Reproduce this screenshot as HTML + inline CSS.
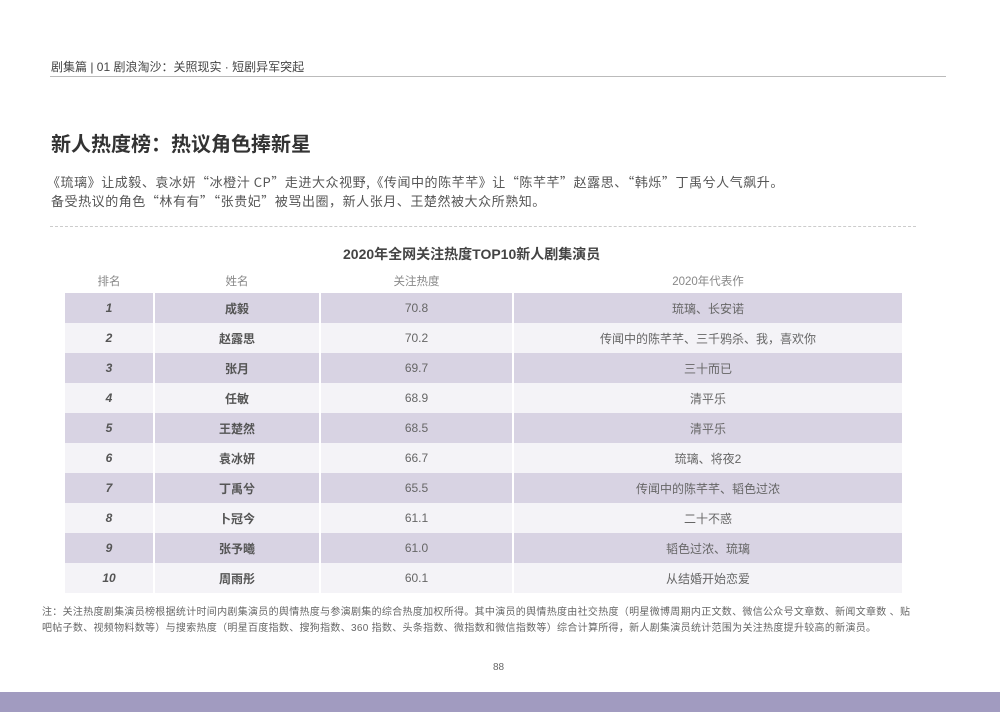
<!DOCTYPE html>
<html><head><meta charset="utf-8"><style>
*{margin:0;padding:0;box-sizing:border-box}
body{width:1000px;height:712px;background:#fff;position:relative;overflow:hidden;font-family:"Liberation Sans","Noto Sans CJK SC",sans-serif;color:#555}
.abs{position:absolute;white-space:nowrap}
.cjk{font-family:"Noto Sans CJK SC",sans-serif}
table{position:absolute;left:65px;top:268px;border-collapse:collapse;width:837px;table-layout:fixed}
td{text-align:center;font-size:12px;color:#666;height:30px;border-left:2px solid #fff;padding:0}
td:first-child{border-left:none}
tr.h td{height:25px;color:#888;font-size:11.5px}
tr.o td{background:#d8d3e3}
tr.e td{background:#f4f3f7}
td.r{font-style:italic;font-weight:bold;color:#555}
td.n{font-weight:bold;color:#555}
</style></head><body>
<div class="abs" style="left:51px;top:58px;font-size:12px;color:#444">剧集篇 | 01 剧浪淘沙：关照现实 · 短剧异军突起</div>
<div class="abs" style="left:50px;top:76px;width:896px;height:1px;background:#bbb"></div>
<div class="abs" style="left:51px;top:128px;font-size:20px;font-weight:bold;color:#333">新人热度榜：热议角色捧新星</div>
<div class="abs cjk" style="left:47px;top:172px;font-size:13px;color:#555;line-height:19px;letter-spacing:0.55px">《琉璃》让成毅、袁冰妍“冰橙汁 CP”走进大众视野,《传闻中的陈芊芊》让“陈芊芊”赵露思、“韩烁”丁禹兮人气飙升。</div>
<div class="abs cjk" style="left:51px;top:191px;font-size:13px;color:#555;line-height:19px;letter-spacing:0.55px">备受热议的角色“林有有”“张贵妃”被骂出圈，新人张月、王楚然被大众所熟知。</div>
<div class="abs" style="left:50px;top:226px;width:866px;border-top:1px dashed #ccc"></div>
<div class="abs" style="left:343px;top:244px;font-size:14px;font-weight:bold;color:#444">2020年全网关注热度TOP10新人剧集演员</div>
<table>
<colgroup><col style="width:89px"><col style="width:166px"><col style="width:193px"><col></colgroup>
<tr class="h"><td>排名</td><td>姓名</td><td>关注热度</td><td>2020年代表作</td></tr>
<tr class="o"><td class="r">1</td><td class="n">成毅</td><td>70.8</td><td>琉璃、长安诺</td></tr>
<tr class="e"><td class="r">2</td><td class="n">赵露思</td><td>70.2</td><td>传闻中的陈芊芊、三千鸦杀、我，喜欢你</td></tr>
<tr class="o"><td class="r">3</td><td class="n">张月</td><td>69.7</td><td>三十而已</td></tr>
<tr class="e"><td class="r">4</td><td class="n">任敏</td><td>68.9</td><td>清平乐</td></tr>
<tr class="o"><td class="r">5</td><td class="n">王楚然</td><td>68.5</td><td>清平乐</td></tr>
<tr class="e"><td class="r">6</td><td class="n">袁冰妍</td><td>66.7</td><td>琉璃、将夜2</td></tr>
<tr class="o"><td class="r">7</td><td class="n">丁禹兮</td><td>65.5</td><td>传闻中的陈芊芊、韬色过浓</td></tr>
<tr class="e"><td class="r">8</td><td class="n">卜冠今</td><td>61.1</td><td>二十不惑</td></tr>
<tr class="o"><td class="r">9</td><td class="n">张予曦</td><td>61.0</td><td>韬色过浓、琉璃</td></tr>
<tr class="e"><td class="r">10</td><td class="n">周雨彤</td><td>60.1</td><td>从结婚开始恋爱</td></tr>
</table>
<div class="abs" style="left:42px;top:603px;font-size:10px;color:#666;letter-spacing:0.3px">注：关注热度剧集演员榜根据统计时间内剧集演员的舆情热度与参演剧集的综合热度加权所得。其中演员的舆情热度由社交热度（明星微博周期内正文数、微信公众号文章数、新闻文章数 、贴</div>
<div class="abs" style="left:42px;top:619px;font-size:10px;color:#666;letter-spacing:0.3px">吧帖子数、视频物料数等）与搜索热度（明星百度指数、搜狗指数、360 指数、头条指数、微指数和微信指数等）综合计算所得，新人剧集演员统计范围为关注热度提升较高的新演员。</div>
<div class="abs" style="left:493px;top:662px;font-size:10px;color:#666">88</div>
<div class="abs" style="left:0;top:692px;width:1000px;height:20px;background:#a19bc0"></div>
</body></html>
